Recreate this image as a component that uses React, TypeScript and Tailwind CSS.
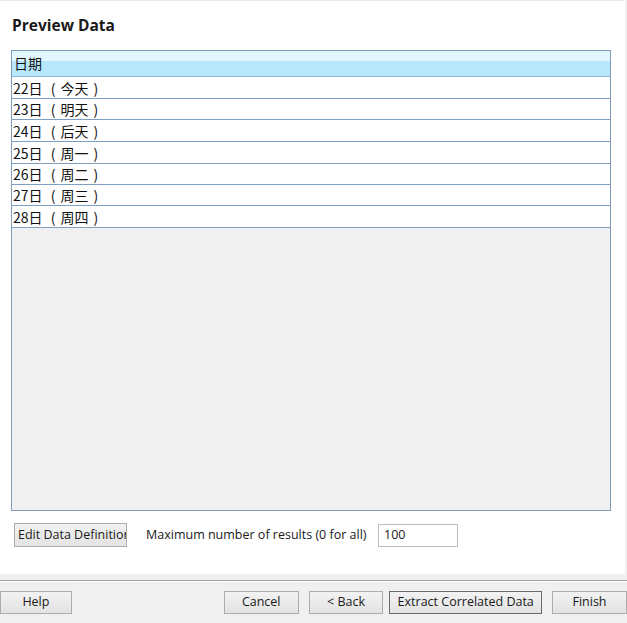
const rows = [
  { day: '22日', name: '今天', h: 'h-[22px]' },
  { day: '23日', name: '明天', h: 'h-[21px]' },
  { day: '24日', name: '后天', h: 'h-[22px]' },
  { day: '25日', name: '周一', h: 'h-[22px]' },
  { day: '26日', name: '周二', h: 'h-[21px]' },
  { day: '27日', name: '周三', h: 'h-[21px]' },
  { day: '28日', name: '周四', h: 'h-[22px]' },
];

const uiFont = "font-['Open_Sans','Noto_Sans',sans-serif]";

function WinButton({
  children,
  className = '',
  primary = false,
}: {
  children: React.ReactNode;
  className?: string;
  primary?: boolean;
}) {
  return (
    <button
      type="button"
      className={`flex h-[23px] items-center justify-center border bg-gradient-to-b from-[#f2f2f2] to-[#e3e3e3] text-[12.5px] text-[#1a1a1a] ${
        primary ? 'border-[#6a6a6a]' : 'border-[#adadad]'
      } ${uiFont} ${className}`}
    >
      {children}
    </button>
  );
}

export default function App() {
  return (
    <div className="flex h-[623px] w-[627px] flex-col overflow-hidden bg-[#f0f0f0]">
      <div className="flex h-[574px] w-[625px] shrink-0 flex-col border-t border-[#ebebeb] bg-white">
        <h1 className={`ml-[12px] mt-[14px] h-[20px] text-[15.5px] font-bold leading-[20px] text-[#1a1a1a] ${uiFont}`}>
          Preview Data
        </h1>

        <div className="ml-[11px] mt-[15px] flex h-[461px] w-[600px] flex-col border border-[#7f9db9] bg-[#f0f0f0]">
          <div className="flex h-[26px] shrink-0 items-center border-b border-[#8bb8da] bg-gradient-to-b from-[#e3f7ff] from-40% to-[#b7e7fb] to-40% pl-[2px] font-['Noto_Sans_CJK_SC',sans-serif] text-[14px] text-[#111]">
            日期
          </div>
          {rows.map((row) => (
            <div
              key={row.day}
              className={`flex ${row.h} shrink-0 items-center whitespace-pre border-b border-[#7f9ec4] bg-white pl-[1px] font-['Noto_Sans_CJK_SC',sans-serif] text-[14px] leading-none text-[#111]`}
            >
              {row.day}
              <span className="inline-block w-[18px] pr-[5px] text-right">(</span>
              {row.name}
              <span className="inline-block w-[16px] pl-[5px] text-left">)</span>
            </div>
          ))}
        </div>

        <div className="mt-[12px] flex items-center">
          <button
            type="button"
            className={`ml-[14px] h-[24px] w-[113px] overflow-hidden whitespace-nowrap border border-[#adadad] bg-gradient-to-b from-[#f2f2f2] to-[#e3e3e3] pl-[3px] text-left text-[12.5px] text-[#1a1a1a] ${uiFont}`}
          >
            Edit Data Definition
          </button>
          <span className={`ml-[19px] text-[12.5px] text-[#1a1a1a] ${uiFont}`}>
            Maximum number of results (0 for all)
          </span>
          <div
            className={`ml-auto mr-[167px] flex h-[23px] w-[80px] items-center border border-[#bdbdbd] bg-white pl-[5px] text-[12.5px] text-[#1a1a1a] ${uiFont}`}
          >
            100
          </div>
        </div>
      </div>

      <div className="mt-[6px] h-[1px] bg-[#a0a0a0]" />
      <div className="h-[1px] bg-white" />

      <div className="mt-[9px] flex items-center">
        <WinButton className="w-[72px]">Help</WinButton>
        <WinButton className="ml-[152px] w-[75px]">Cancel</WinButton>
        <WinButton className="ml-[10px] w-[75px]">&lt; Back</WinButton>
        <WinButton primary className="ml-[6px] w-[153px]">
          Extract Correlated Data
        </WinButton>
        <WinButton className="ml-[10px] w-[75px] shrink-0">Finish</WinButton>
      </div>
    </div>
  );
}
